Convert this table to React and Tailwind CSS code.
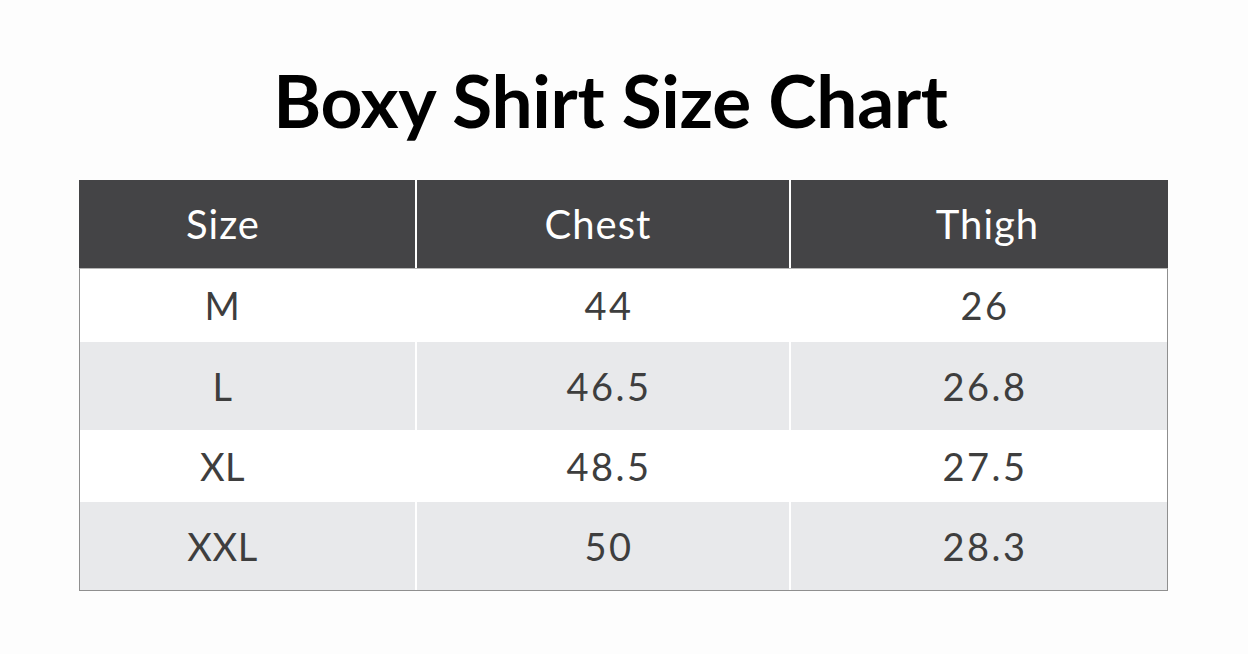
import React from "react";

const rows = [
  { size: "M", chest: "44", thigh: "26", bg: "bg-white", h: "h-[73px]" },
  { size: "L", chest: "46.5", thigh: "26.8", bg: "bg-[#e8e9eb]", h: "h-[88px]" },
  { size: "XL", chest: "48.5", thigh: "27.5", bg: "bg-white", h: "h-[72px]" },
  { size: "XXL", chest: "50", thigh: "28.3", bg: "bg-[#e8e9eb]", h: "h-[88px]" },
];

const App = () => {
  return (
    <div className="w-full h-[654px] bg-[#fdfdfd] font-['Lato','Liberation_Sans',sans-serif]">
      <div className="pt-[60px] pl-[79px]">
        <h1 className="w-[1089px] pr-[26px] text-center text-[73px] leading-[80px] font-bold text-black tracking-[-0.3px]">
          Boxy Shirt Size Chart
        </h1>

        <div className="mt-[40px] w-[1089px]">
          {/* header */}
          <div className="flex h-[88px] bg-[#444446] text-white text-[40px] tracking-[1px]">
            <div className="w-[336px] flex items-center justify-center pr-[48px]">Size</div>
            <div className="w-[2px] bg-white"></div>
            <div className="w-[372px] flex items-center justify-center pr-[10px]">Chest</div>
            <div className="w-[2px] bg-white"></div>
            <div className="flex-1 flex items-center justify-center pl-[16px]">Thigh</div>
          </div>

          {/* body */}
          <div className="border-l border-r border-b border-[#8f8f8f] border-t border-t-[#b5b5b5]">
            {rows.map((r) => (
              <div key={r.size} className={`flex ${r.h} ${r.bg} text-[#3e3e3e] text-[38px]`}>
                <div className="w-[335px] flex items-center justify-center pr-[50px] tracking-[0.5px]">{r.size}</div>
                <div className="w-[2px] bg-white"></div>
                <div className="w-[372px] flex items-center justify-center pl-[12px] tracking-[2.5px]">{r.chest}</div>
                <div className="w-[2px] bg-white"></div>
                <div className="flex-1 flex items-center justify-center pl-[12px] tracking-[2.5px]">{r.thigh}</div>
              </div>
            ))}
          </div>
        </div>
      </div>
    </div>
  );
};

export default App;
